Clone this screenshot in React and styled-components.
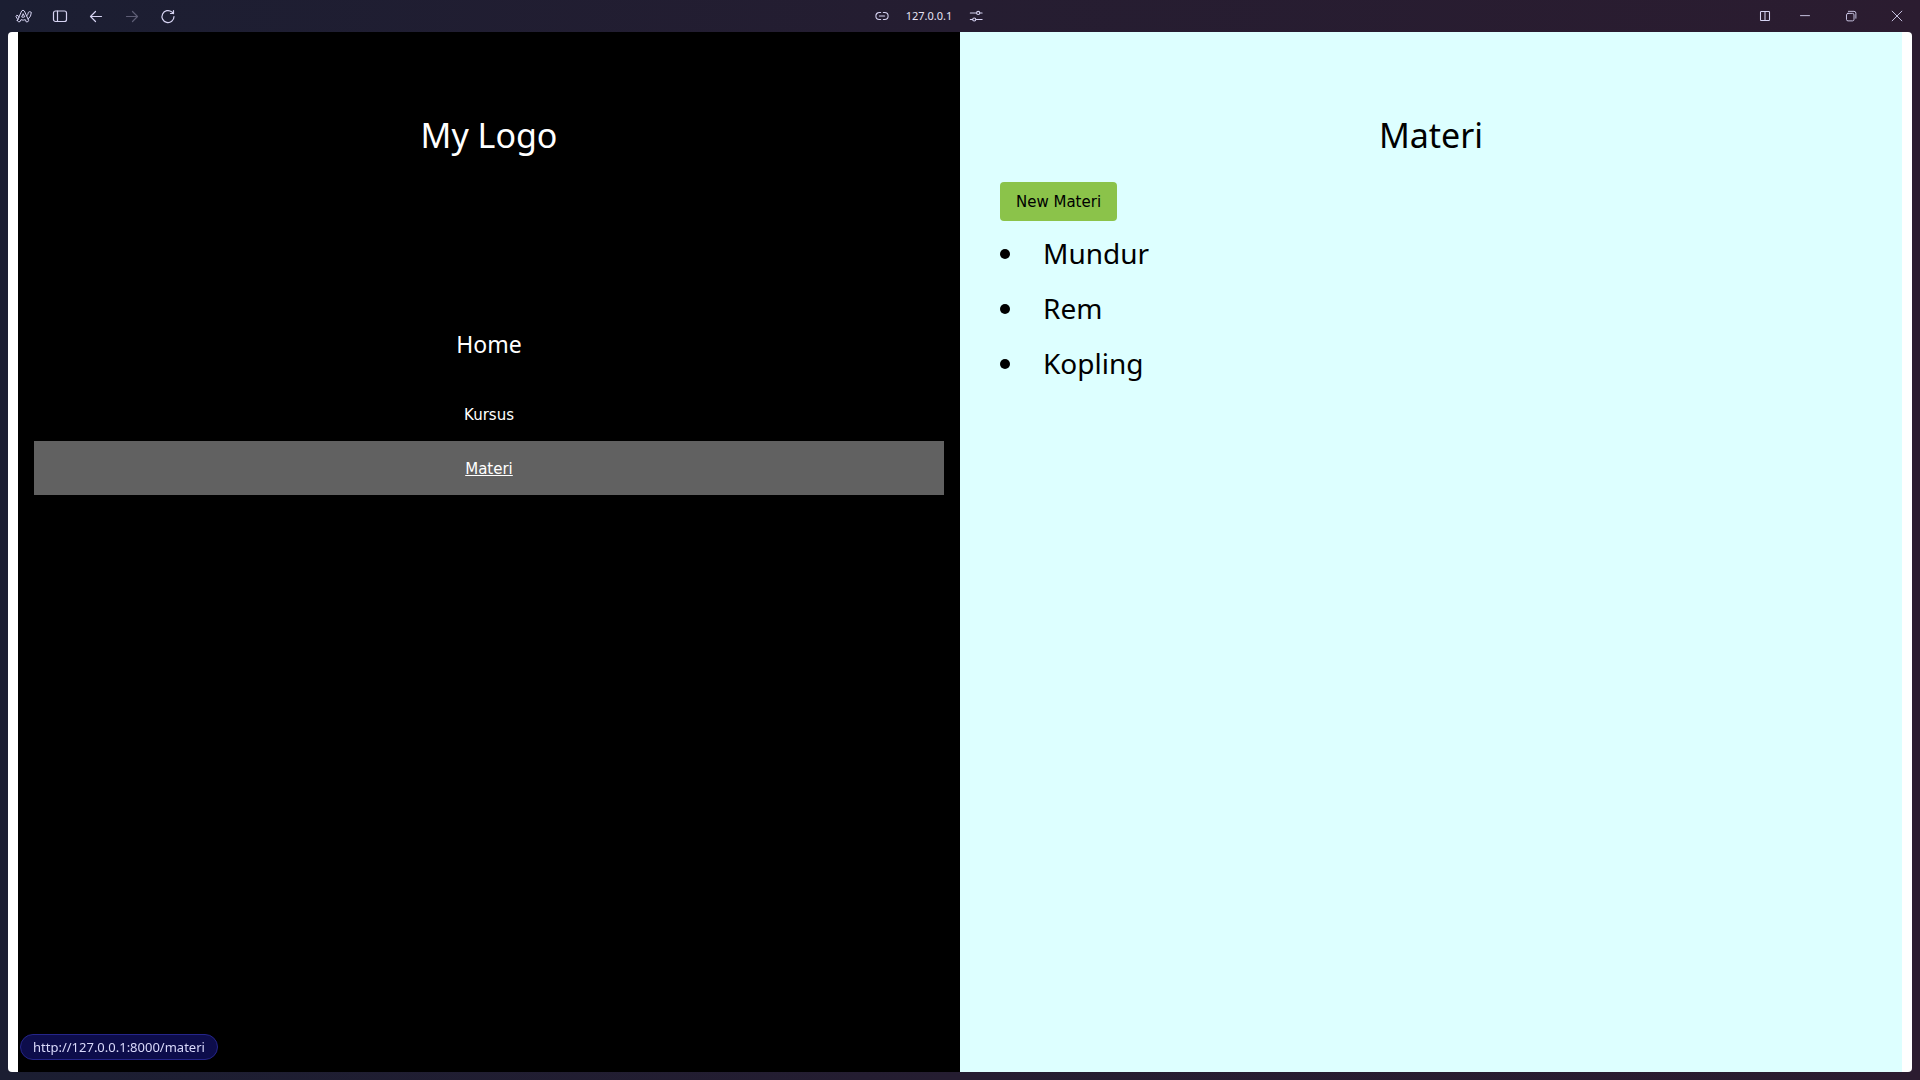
import React from "react";
import styled, { createGlobalStyle, css } from "styled-components";

const Global = createGlobalStyle`
  *, *::before, *::after { box-sizing: border-box; }
  body {
    margin: 0;
    font-family: "Noto Sans", sans-serif;
    font-size: 15px;
    line-height: 22px;
  }
`;

const bodyFont = css`font-family: "DejaVu Sans", sans-serif;`;

const Frame = styled.div`
  min-height: 100vh;
  display: flex;
  flex-direction: column;
  background: linear-gradient(90deg, #1b1e32 0%, #251d31 50%, #2b1c30 100%);
`;

const TopBar = styled.header`
  height: 32px;
  display: grid;
  grid-template-columns: 1fr auto 1fr;
  align-items: center;
  padding-left: 14px;
  color: #d6d3f2;
`;

const Tools = styled.div`
  display: flex;
  align-items: center;
  gap: 16px;
`;

const AddressTools = styled(Tools)`
  padding-right: 76px;
`;

const WindowTools = styled(Tools)`
  gap: 0;
  justify-content: flex-end;
`;

const IconButton = styled.button`
  width: ${(p) => p.$width || 20}px;
  height: 32px;
  display: flex;
  align-items: center;
  justify-content: center;
  padding: 0;
  border: 0;
  background: none;
  color: inherit;
  opacity: ${(p) => (p.disabled ? 0.35 : 1)};
`;

const Address = styled.span`
  font-size: 11px;
  line-height: 16px;
  color: #e6e3f5;
`;

const Page = styled.div`
  flex: 1;
  display: grid;
  grid-template-columns: 1fr 1fr;
  margin: 0 8px 8px;
  padding: 0 10px;
  border-radius: 4px;
  background: #fff;
`;

const Sidebar = styled.nav`
  display: flex;
  flex-direction: column;
  padding: 76px 16px 0;
  background: #000;
  color: #fff;
  text-align: center;
`;

const Content = styled.main`
  padding: 76px 40px 0;
  background: #ddffff;
  color: #000;
`;

const Title = styled.h1`
  margin: 0 0 20px;
  font-size: 34px;
  line-height: 54px;
  font-weight: 400;
  text-align: center;
`;

const HomeHeading = styled.h3`
  margin: 144px 0 25px;
  font-size: 23px;
  line-height: 36px;
  font-weight: 400;
`;

const PlainLink = styled.a`
  color: inherit;
  text-decoration: none;
`;

const NavLink = styled.a`
  ${bodyFont}
  display: block;
  padding: 17px 16px 15px;
  color: #fff;
  background: ${(p) => (p.$active ? "#616161" : "transparent")};
  text-decoration: ${(p) => (p.$active ? "underline" : "none")};
`;

const NewButton = styled.button`
  ${bodyFont}
  display: block;
  padding: 9px 16px 8px;
  border: 0;
  border-radius: 4px;
  background: #8bc34a;
  color: #000;
  font-size: 15px;
  line-height: 22px;
`;

const List = styled.ul`
  display: grid;
  gap: 10px;
  margin: 10px 0 0;
  padding: 0;
  list-style: disc inside;
  font-size: 28px;
  line-height: 45px;
`;

const ItemLink = styled(PlainLink)`
  padding-left: 4px;
`;

const StatusBubble = styled.div`
  position: fixed;
  left: 20px;
  bottom: 20px;
  padding: 1px 12px;
  border: 1px solid #25258a;
  border-radius: 13px;
  background: #0d0d4b;
  color: #d9d9fa;
  font-size: 13px;
  line-height: 24px;
  height: 26px;
  display: flex;
  align-items: center;
`;

const Icon = ({ size = 16, children, stroke = 1.2 }) => (
  <svg width={size} height={size} viewBox="0 0 16 16" fill="none" stroke="currentColor"
    strokeWidth={stroke} strokeLinecap="round" strokeLinejoin="round" aria-hidden="true">
    {children}
  </svg>
);

const ArcLogo = () => (
  <svg width="18" height="14" viewBox="46 29 54 42" fill="none" stroke="currentColor"
    strokeWidth="3" strokeLinecap="round" strokeLinejoin="round" aria-hidden="true">
    <path d="M53 64 66 35q4-5 8 0l13 28q0 5-7 5l-3-7q-7 3-13 0l-3 6q-5 3-8-3z" />
    <path d="M70 44l-4 9q4 2 8 0z" />
    <path d="M81 50q5-5 5-11 4-4 9 0 0 12-9 20" />
    <path d="M58 54q-2-2-3-5-5-3-6 2 2 6 6 10" />
  </svg>
);

export default function App() {
  return (
    <>
      <Global />
      <Frame>
        <TopBar>
          <Tools>
            <IconButton aria-label="Arc menu"><ArcLogo /></IconButton>
            <IconButton aria-label="Toggle sidebar">
              <Icon><rect x="1.5" y="3" width="13" height="10.5" rx="2" /><path d="M5.5 3v10.500" /></Icon>
            </IconButton>
            <IconButton aria-label="Back">
              <Icon><path d="M13.500 8.500H2.500M7.500 3.500l-5 5 5 5" /></Icon>
            </IconButton>
            <IconButton aria-label="Forward" disabled>
              <Icon><path d="M2.500 8.500h11M8.500 3.500l5 5-5 5" /></Icon>
            </IconButton>
            <IconButton aria-label="Reload">
              <Icon><path d="M14 8.500a6 6 0 1 1-2.200-4.600L13.500 5.500M13.500 2.500v3h-3" /></Icon>
            </IconButton>
          </Tools>
          <AddressTools>
            <IconButton aria-label="Copy link" $width={16}>
              <Icon size={14}><path d="M6.500 4H5a4 4 0 0 0 0 8h1.500M9.500 4H11a4 4 0 0 1 0 8H9.500M5 8h6" /></Icon>
            </IconButton>
            <Address>127.0.0.1</Address>
            <IconButton aria-label="Site settings" $width={16}>
              <Icon size={14}><path d="M1.500 4.500h7M12.500 4.500H15M1.500 12H4M8 12h7" /><circle cx="10.500" cy="4.500" r="1.800" /><circle cx="6" cy="12" r="1.800" /></Icon>
            </IconButton>
          </AddressTools>
          <WindowTools>
            <IconButton aria-label="Split view" $width={34}>
              <Icon size={12} stroke={1.4}><rect x="2" y="2" width="12" height="12" rx="1" /><path d="M8 2v12" /></Icon>
            </IconButton>
            <IconButton aria-label="Minimize" $width={46}><Icon size={12}><path d="M2 7.500h12" /></Icon></IconButton>
            <IconButton aria-label="Restore" $width={46}>
              <Icon size={12}><rect x="2" y="4.500" width="10" height="10" rx="2" /><path d="M4.500 1.800H12a2.500 2.500 0 0 1 2.500 2.500V11" /></Icon>
            </IconButton>
            <IconButton aria-label="Close" $width={46}><Icon size={12}><path d="M1.500 1.500l13 13M14.500 1.500l-13 13" /></Icon></IconButton>
          </WindowTools>
        </TopBar>
        <Page>
          <Sidebar>
            <Title as="h2">My Logo</Title>
            <HomeHeading><PlainLink href="#home">Home</PlainLink></HomeHeading>
            <NavLink href="#kursus">Kursus</NavLink>
            <NavLink href="#materi" $active>Materi</NavLink>
          </Sidebar>
          <Content>
            <Title>Materi</Title>
            <NewButton>New Materi</NewButton>
            <List>
              {["Mundur", "Rem", "Kopling"].map((name) => (
                <li key={name}><ItemLink href={`#${name}`}>{name}</ItemLink></li>
              ))}
            </List>
          </Content>
        </Page>
      </Frame>
      <StatusBubble>http://127.0.0.1:8000/materi</StatusBubble>
    </>
  );
}
